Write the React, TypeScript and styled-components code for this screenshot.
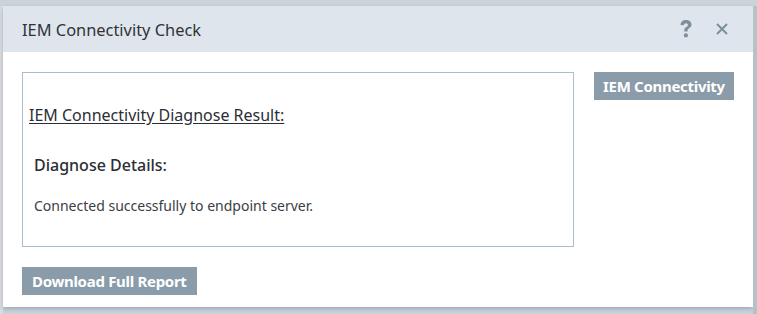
import React from "react";
import styled, { createGlobalStyle } from "styled-components";

const GlobalStyle = createGlobalStyle`
  html, body {
    margin: 0;
    padding: 0;
    background: #c9d1d8;
    font-family: "Noto Sans", "Open Sans", sans-serif;
  }
  #root {
    height: 314px;
    overflow: hidden;
  }
`;

const Backdrop = styled.div`
  display: flex;
  height: 314px;
  padding-top: 6px;
  box-sizing: border-box;
  background: #cbd3da;
`;

const Edge = styled.div<{ $tone: string }>`
  flex-shrink: 0;
  width: ${(p) => (p.$tone === "left" ? "3px" : "4px")};
  background: ${(p) => (p.$tone === "left" ? "#d9dde1" : "#b7c1ca")};
`;

const Dialog = styled.div`
  flex-shrink: 0;
  width: 750px;
  height: 301px;
  background: #fff;
  display: flex;
  flex-direction: column;
  box-shadow: 0 2px 4px rgba(80, 95, 110, 0.35);
`;

const Header = styled.div`
  height: 47px;
  background: #dfe5ec;
  display: flex;
  align-items: center;
  padding: 0 19px;
`;

const Title = styled.div`
  flex: 1;
  font-size: 16.4px;
  color: #2f3338;
`;

const IconButton = styled.span`
  display: inline-flex;
  align-items: center;
  justify-content: center;
  width: 24px;
  color: #7d8e9c;
  margin-left: 12px;
`;

const Body = styled.div`
  flex: 1;
  padding: 20px 19px 12px 19px;
  display: flex;
  flex-direction: column;
  gap: 20px;
`;

const Row = styled.div`
  display: flex;
  gap: 20px;
  align-items: flex-start;
`;

const ResultBox = styled.div`
  flex-shrink: 0;
  width: 552px;
  height: 175px;
  box-sizing: border-box;
  border: 1px solid #a9bfcd;
  padding: 31px 8px 0 6px;
  color: #2b2e33;
`;

const ResultTitle = styled.div`
  font-size: 16px;
  text-decoration: underline;
  text-underline-offset: 2px;
`;

const DetailsTitle = styled.div`
  font-size: 16px;
  font-weight: 500;
  margin: 28px 0 0 5px;
`;

const Message = styled.div`
  font-size: 14px;
  margin: 20px 0 0 5px;
  color: #3a3e44;
`;

const ActionButton = styled.button<{ $pad?: number }>`
  flex-shrink: 0;
  height: 28px;
  padding: 0 ${(p) => p.$pad ?? 10}px;
  border: none;
  background: #8a9baa;
  color: #fff;
  font-family: inherit;
  font-size: 15px;
  font-weight: 700;
  white-space: nowrap;
  align-self: flex-start;
  letter-spacing: -0.3px;
`;

export default function App() {
  return (
    <>
      <GlobalStyle />
      <Backdrop>
        <Edge $tone="left" />
        <Dialog>
          <Header>
            <Title>IEM Connectivity Check</Title>
            <IconButton>
              <svg width="14" height="20" viewBox="0 0 14 20">
                <path
                  d="M1.5 6C1.5 3 3.8 1 7 1s5.5 1.8 5.5 4.6c0 2.2-1.4 3.2-2.7 4C8.7 10.3 8.6 10.8 8.6 12.4H5.2c0-2.4.6-3.4 2.1-4.3C8.4 7.4 8.9 7 8.9 6c0-1-.8-1.7-1.9-1.7-1.2 0-2 .7-2.1 1.9z"
                  fill="currentColor"
                />
                <circle cx="6.9" cy="16.4" r="2.1" fill="currentColor" />
              </svg>
            </IconButton>
            <IconButton>
              <svg width="14" height="14" viewBox="0 0 14 14">
                <path d="M2 2l10 10M12 2L2 12" stroke="currentColor" strokeWidth="2" />
              </svg>
            </IconButton>
          </Header>
          <Body>
            <Row>
              <ResultBox>
                <ResultTitle>IEM Connectivity Diagnose Result:</ResultTitle>
                <DetailsTitle>Diagnose Details:</DetailsTitle>
                <Message>Connected successfully to endpoint server.</Message>
              </ResultBox>
              <ActionButton $pad={9}>IEM Connectivity</ActionButton>
            </Row>
            <ActionButton>Download Full Report</ActionButton>
          </Body>
        </Dialog>
        <Edge $tone="right" />
      </Backdrop>
    </>
  );
}
